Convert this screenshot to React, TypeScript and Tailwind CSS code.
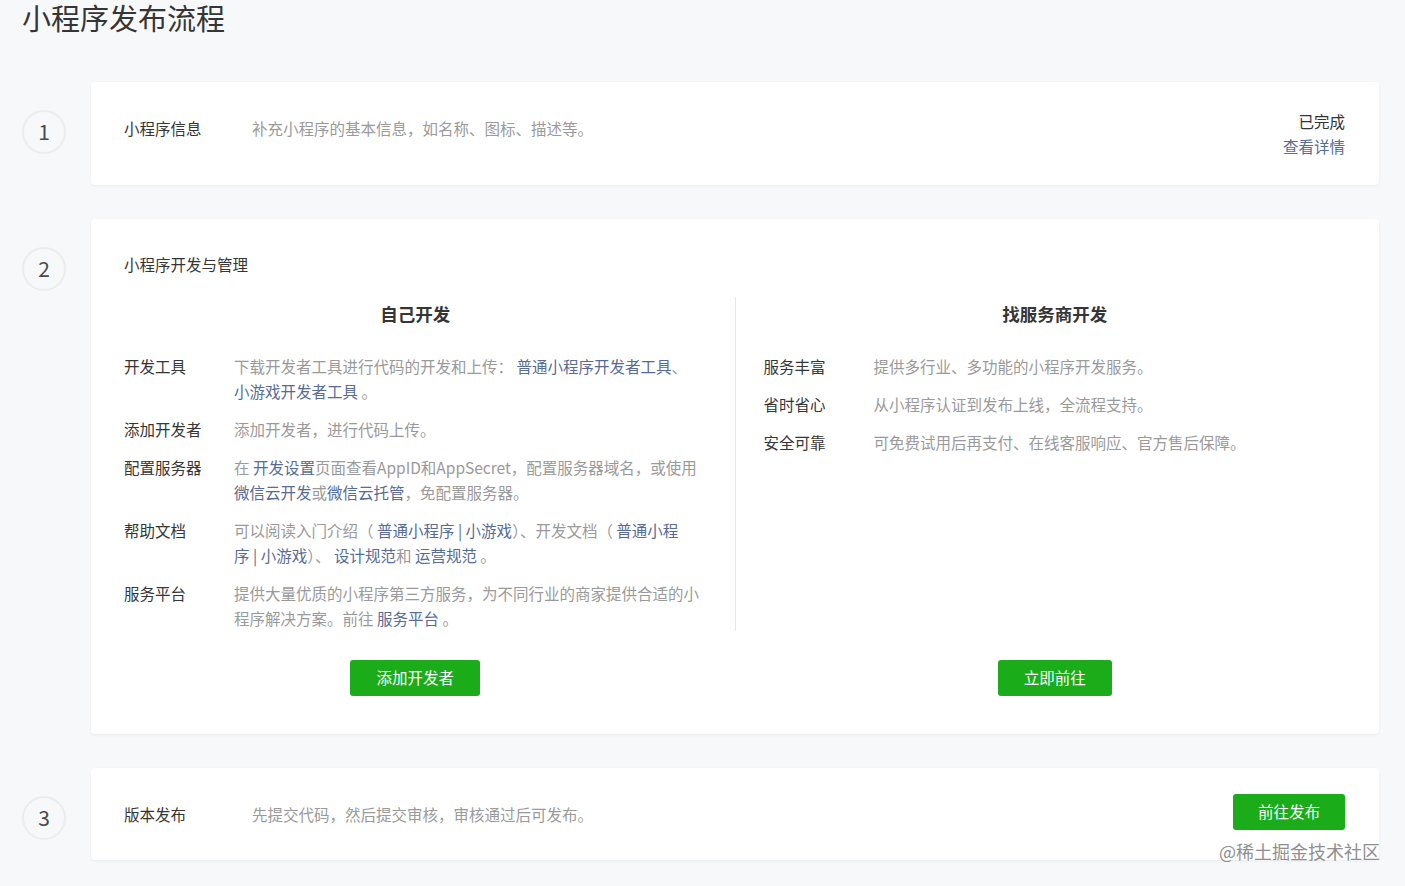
import React from 'react'

const font = '[font-family:"PingFang_SC","Noto_Sans_CJK_SC","Noto_Sans",sans-serif]'

type Part = string | { link: string } | { br: true }

interface Row {
  label: string
  parts: Part[]
}

const selfRows: Row[] = [
  {
    label: '开发工具',
    parts: ['下载开发者工具进行代码的开发和上传： ', { link: '普通小程序开发者工具' }, '、', { br: true }, { link: '小游戏开发者工具' }, ' 。'],
  },
  { label: '添加开发者', parts: ['添加开发者，进行代码上传。'] },
  {
    label: '配置服务器',
    parts: ['在 ', { link: '开发设置' }, '页面查看AppID和AppSecret，配置服务器域名，或使用', { br: true }, { link: '微信云开发' }, '或', { link: '微信云托管' }, '，免配置服务器。'],
  },
  {
    label: '帮助文档',
    parts: [
      '可以阅读入门介绍（ ',
      { link: '普通小程序 | 小游戏' },
      '）、开发文档（ ',
      { link: '普通小程' },
      { br: true },
      { link: '序 | 小游戏' },
      '）、 ',
      { link: '设计规范' },
      '和 ',
      { link: '运营规范' },
      ' 。',
    ],
  },
  {
    label: '服务平台',
    parts: ['提供大量优质的小程序第三方服务，为不同行业的商家提供合适的小', { br: true }, '程序解决方案。前往 ', { link: '服务平台' }, ' 。'],
  },
]

const vendorRows: Row[] = [
  { label: '服务丰富', parts: ['提供多行业、多功能的小程序开发服务。'] },
  { label: '省时省心', parts: ['从小程序认证到发布上线，全流程支持。'] },
  { label: '安全可靠', parts: ['可免费试用后再支付、在线客服响应、官方售后保障。'] },
]

const StepCircle = ({ n }: { n: number }) => (
  <div className="mt-[28px] flex h-[44px] w-[44px] shrink-0 items-center justify-center rounded-full border-2 border-[#ececec] bg-[#f7f8fa] text-[21px] text-[#4a4a4a]">
    {n}
  </div>
)

const GreenButton = ({ children, className = '' }: { children: React.ReactNode; className?: string }) => (
  <button
    type="button"
    className={`h-[36px] rounded-[3px] bg-[#1aad19] text-[15.5px] text-white ${className}`}
  >
    {children}
  </button>
)

const RowList = ({ rows }: { rows: Row[] }) => (
  <div className="flex flex-col gap-[13px]">
    {rows.map((row) => (
      <div key={row.label} className="flex text-[15.5px] leading-[25px]">
        <div className="w-[110px] shrink-0 text-[#353535]">{row.label}</div>
        <div className="min-w-0 flex-1 whitespace-nowrap text-[#9a9a9a]">
          {row.parts.map((p, i) => {
            if (typeof p === 'string') return <span key={i}>{p}</span>
            if ('br' in p) return <br key={i} />
            return (
              <span key={i} className="text-[#576b95]">
                {p.link}
              </span>
            )
          })}
        </div>
      </div>
    ))}
  </div>
)

const Card = ({ children, className = '' }: { children: React.ReactNode; className?: string }) => (
  <div className={`flex-1 rounded-[4px] bg-white shadow-[0_1px_3px_rgba(0,0,0,0.06)] ${className}`}>{children}</div>
)

export default function App() {
  return (
    <div className={`relative min-h-[886px] bg-[#f7f8fa] pl-[22px] pr-[26px] ${font}`}>
      <h1 className="text-[29px] leading-[34px] font-normal text-[#353535]">小程序发布流程</h1>

      <div className="mt-[48px] flex flex-col gap-[34px]">
        {/* step 1 */}
        <div className="flex items-start gap-[25px]">
          <StepCircle n={1} />
          <Card className="flex h-[103px] items-center justify-between pl-[33px] pr-[34px]">
            <div className="-mt-[11px] flex text-[15.5px] leading-[25px]">
              <span className="w-[128px] text-[#353535]">小程序信息</span>
              <span className="text-[#9a9a9a]">补充小程序的基本信息，如名称、图标、描述等。</span>
            </div>
            <div className="flex flex-col items-end text-[15.5px] leading-[25px]">
              <span className="text-[#353535]">已完成</span>
              <span className="text-[#576b95]">查看详情</span>
            </div>
          </Card>
        </div>

        {/* step 2 */}
        <div className="flex items-start gap-[25px]">
          <StepCircle n={2} />
          <Card className="px-[33px] pt-[33px] pb-[38px]">
            <div className="text-[15.5px] leading-[25px] text-[#353535]">小程序开发与管理</div>
            <div className="mt-[20px] flex">
              <div className="flex-1 pr-[28px]">
                <h3 className="pt-[5px] text-center text-[17.5px] leading-[24px] font-semibold text-[#353535]">自己开发</h3>
                <div className="mt-[28px]">
                  <RowList rows={selfRows} />
                </div>
              </div>
              <div className="w-px bg-[#e7e7e7]" />
              <div className="flex-1 pl-[28px]">
                <h3 className="pt-[5px] text-center text-[17.5px] leading-[24px] font-semibold text-[#353535]">找服务商开发</h3>
                <div className="mt-[28px]">
                  <RowList rows={vendorRows} />
                </div>
              </div>
            </div>
            <div className="mt-[29px] flex">
              <div className="flex flex-1 justify-center pr-[28px]">
                <GreenButton className="w-[130px]">添加开发者</GreenButton>
              </div>
              <div className="w-px" />
              <div className="flex flex-1 justify-center pl-[28px]">
                <GreenButton className="w-[114px]">立即前往</GreenButton>
              </div>
            </div>
          </Card>
        </div>

        {/* step 3 */}
        <div className="flex items-start gap-[25px]">
          <StepCircle n={3} />
          <Card className="flex h-[92px] items-center justify-between pl-[33px] pr-[34px]">
            <div className="flex text-[15.5px] leading-[25px]">
              <span className="w-[128px] text-[#353535]">版本发布</span>
              <span className="text-[#9a9a9a]">先提交代码，然后提交审核，审核通过后可发布。</span>
            </div>
            <GreenButton className="-mt-[4px] h-[35px] w-[112px]">前往发布</GreenButton>
          </Card>
        </div>
      </div>

      <span className="absolute right-[25px] top-[839px] text-[18px] leading-[24px] text-[#8f8f8f] [text-shadow:0_0_2px_#fff]">
        @稀土掘金技术社区
      </span>
    </div>
  )
}
